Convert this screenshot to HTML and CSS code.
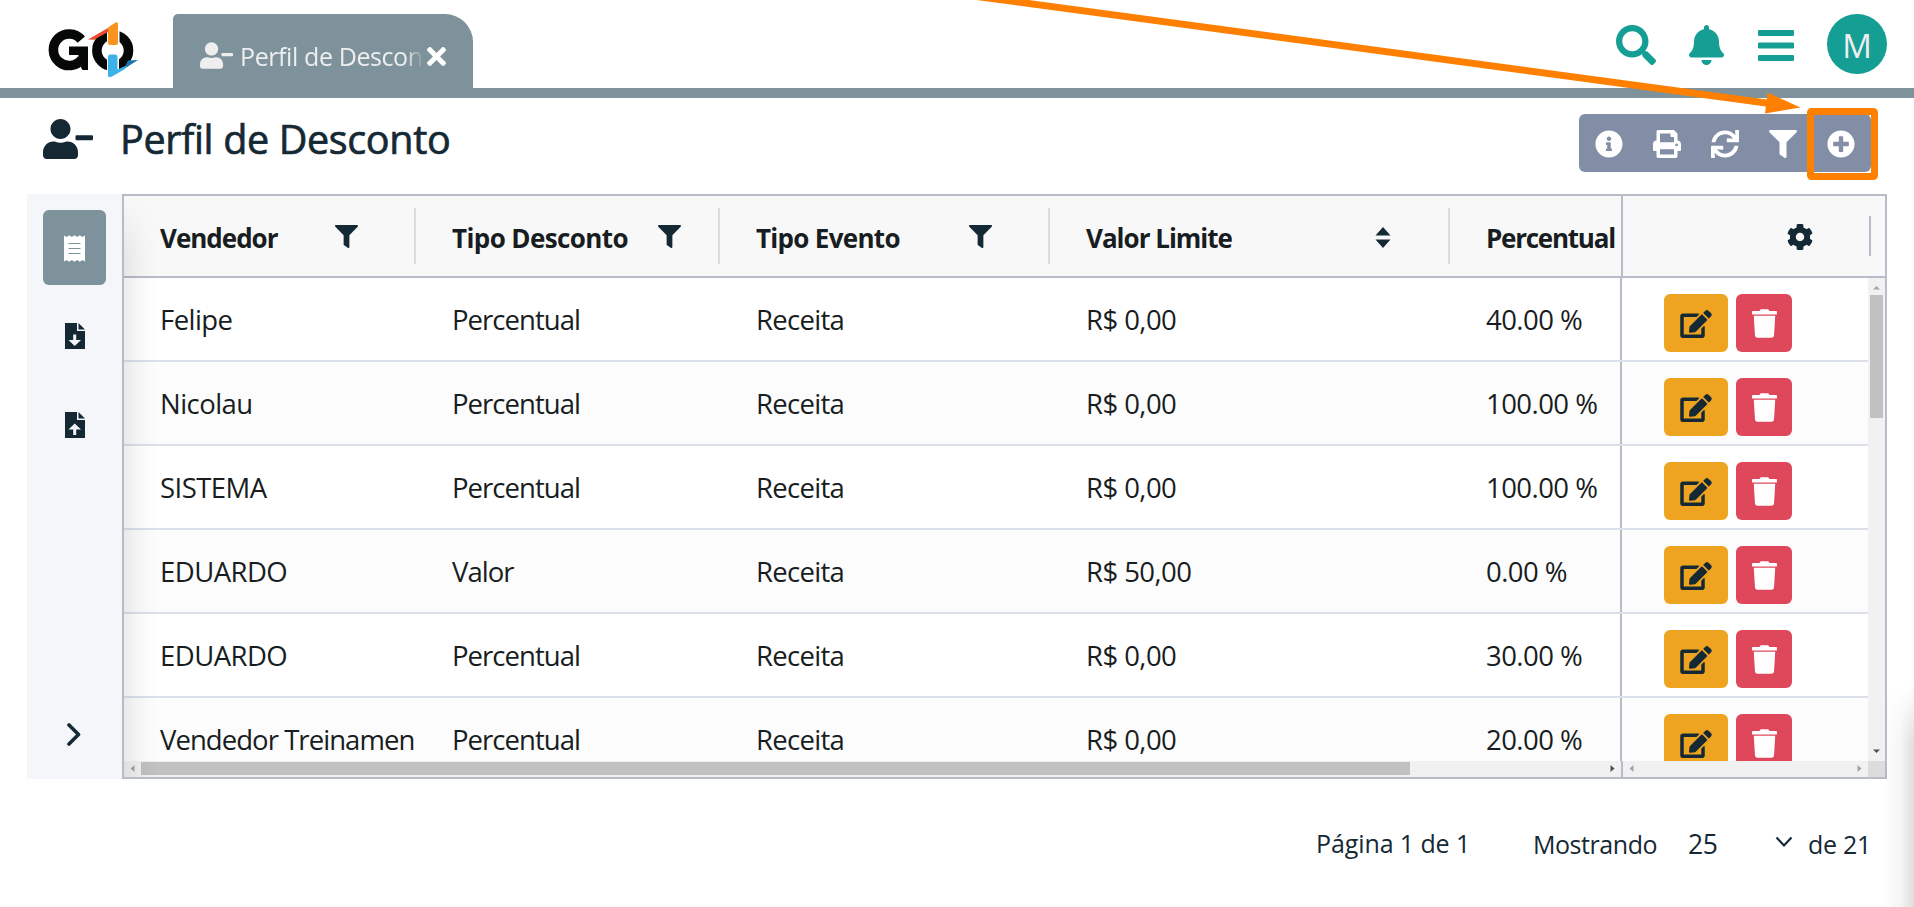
FILE: index.html
```html
<!DOCTYPE html>
<html lang="pt-BR">
<head>
<meta charset="utf-8">
<title>Perfil de Desconto</title>
<link rel="stylesheet" href="styles.css">
</head>
<body>
<svg class="sprite" aria-hidden="true">
  <symbol id="user-minus" viewBox="0 0 640 512"><path d="M624 208H432c-8.800 0-16 7.200-16 16v32c0 8.800 7.200 16 16 16h192c8.800 0 16-7.200 16-16v-32c0-8.800-7.200-16-16-16zm-400 48c70.700 0 128-57.300 128-128S294.700 0 224 0 96 57.300 96 128s57.300 128 128 128zm89.600 32h-16.700c-22.200 10.200-46.900 16-72.900 16s-50.600-5.800-72.900-16h-16.700C60.200 288 0 348.200 0 422.400V464c0 26.500 21.500 48 48 48h352c26.500 0 48-21.500 48-48v-41.600c0-74.200-60.200-134.400-134.400-134.400z"/></symbol>
  <symbol id="times" viewBox="0 80 352 352"><path d="M242.720 256l100.070-100.070c12.280-12.280 12.280-32.190 0-44.480l-22.240-22.240c-12.280-12.280-32.190-12.280-44.480 0L176 189.280 75.930 89.210c-12.280-12.280-32.190-12.280-44.480 0L9.210 111.450c-12.280 12.280-12.280 32.190 0 44.480L109.280 256 9.210 356.070c-12.280 12.280-12.280 32.190 0 44.480l22.240 22.240c12.280 12.280 32.200 12.280 44.480 0L176 322.720l100.070 100.070c12.280 12.280 32.200 12.280 44.480 0l22.240-22.240c12.280-12.280 12.280-32.190 0-44.480L242.720 256z"/></symbol>
  <symbol id="search" viewBox="0 0 512 512"><path d="M505 442.700L405.300 343c-4.500-4.500-10.600-7-17-7H372c27.600-35.300 44-79.700 44-128C416 93.100 322.900 0 208 0S0 93.100 0 208s93.100 208 208 208c48.300 0 92.700-16.400 128-44v16.300c0 6.400 2.500 12.500 7 17l99.700 99.700c9.400 9.400 24.600 9.400 33.900 0l28.300-28.300c9.400-9.400 9.400-24.600.1-34zM208 336c-70.700 0-128-57.200-128-128 0-70.700 57.200-128 128-128 70.700 0 128 57.200 128 128 0 70.700-57.200 128-128 128z"/></symbol>
  <symbol id="bell" viewBox="0 0 448 512"><path d="M224 512c35.320 0 63.970-28.650 63.970-64H160.030c0 35.350 28.650 64 63.970 64zm215.390-149.710c-19.320-20.760-55.470-51.990-55.470-154.290 0-77.700-54.480-139.900-127.940-155.160V32c0-17.670-14.320-32-31.980-32s-31.980 14.330-31.980 32v20.840C118.560 68.100 64.080 130.300 64.080 208c0 102.300-36.150 133.530-55.470 154.290-6 6.450-8.660 14.160-8.610 21.710.11 16.400 12.980 32 32.100 32h383.800c19.120 0 32-15.600 32.100-32 .05-7.550-2.610-15.270-8.610-21.710z"/></symbol>
  <symbol id="bars" viewBox="0 0 36 32"><rect width="36" height="6" rx="1.200"/><rect y="12.500" width="36" height="6" rx="1.200"/><rect y="25" width="36" height="6" rx="1.200"/></symbol>
  <symbol id="info" viewBox="0 0 512 512"><path d="M256 8C119.043 8 8 119.083 8 256c0 136.997 111.043 248 248 248s248-111.003 248-248C504 119.083 392.957 8 256 8zm0 110c23.196 0 42 18.804 42 42s-18.804 42-42 42-42-18.804-42-42 18.804-42 42-42zm56 254c0 6.627-5.373 12-12 12h-88c-6.627 0-12-5.373-12-12v-24c0-6.627 5.373-12 12-12h12v-64h-12c-6.627 0-12-5.373-12-12v-24c0-6.627 5.373-12 12-12h64c6.627 0 12 5.373 12 12v100h12c6.627 0 12 5.373 12 12v24z"/></symbol>
  <symbol id="print" viewBox="0 0 512 512"><path d="M448 192V77.250c0-8.490-3.370-16.620-9.370-22.630L393.370 9.370c-6-6-14.140-9.370-22.630-9.370H96C78.330 0 64 14.330 64 32v160c-35.350 0-64 28.650-64 64v112c0 8.840 7.160 16 16 16h48v96c0 17.670 14.330 32 32 32h320c17.670 0 32-14.330 32-32v-96h48c8.840 0 16-7.160 16-16V256c0-35.350-28.650-64-64-64zm-64 256H128v-96h256v96zm0-224H128V64h192v48c0 8.840 7.160 16 16 16h48v96zm48 72c-13.250 0-24-10.750-24-24 0-13.260 10.750-24 24-24s24 10.740 24 24c0 13.250-10.750 24-24 24z"/></symbol>
  <symbol id="sync" viewBox="0 0 512 512"><path d="M440.650 12.570l4 82.770A247.160 247.160 0 0 0 255.830 8C134.730 8 33.910 94.920 12.290 209.820A12 12 0 0 0 24.090 224h49.050a12 12 0 0 0 11.670-9.260 175.910 175.910 0 0 1 317-56.940l-101.460-4.860a12 12 0 0 0-12.570 12v47.410a12 12 0 0 0 12 12H500a12 12 0 0 0 12-12V12a12 12 0 0 0-12-12h-47.370a12 12 0 0 0-11.980 12.570zM255.830 432a175.610 175.610 0 0 1-146-77.800l101.800 4.870a12 12 0 0 0 12.570-12v-47.400a12 12 0 0 0-12-12H12a12 12 0 0 0-12 12V500a12 12 0 0 0 12 12h47.350a12 12 0 0 0 12-12.600l-4.150-82.570A247.170 247.170 0 0 0 255.830 504c121.110 0 221.930-86.920 243.550-201.820a12 12 0 0 0-11.800-14.180h-49.050a12 12 0 0 0-11.670 9.260A175.860 175.860 0 0 1 255.830 432z"/></symbol>
  <symbol id="filter" viewBox="0 0 512 512"><path d="M487.976 0H24.028C2.710 0-8.047 25.866 7.058 40.971L192 225.941V432c0 7.831 3.821 15.170 10.237 19.662l80 55.980C298.020 518.690 320 507.493 320 487.980V225.941l184.947-184.970C520.021 25.896 509.338 0 487.976 0z"/></symbol>
  <symbol id="plus" viewBox="0 0 512 512"><path d="M256 8C119 8 8 119 8 256s111 248 248 248 248-111 248-248S393 8 256 8zm144 276c0 6.600-5.400 12-12 12h-92v92c0 6.600-5.400 12-12 12h-56c-6.600 0-12-5.400-12-12v-92h-92c-6.600 0-12-5.400-12-12v-56c0-6.600 5.400-12 12-12h92v-92c0-6.600 5.400-12 12-12h56c6.600 0 12 5.400 12 12v92h92c6.600 0 12 5.400 12 12v56z"/></symbol>
  <symbol id="trash" viewBox="0 0 448 512"><path d="M432 32H312l-9.400-18.700A24 24 0 0 0 281.100 0H166.800a23.720 23.720 0 0 0-21.400 13.300L136 32H16A16 16 0 0 0 0 48v32a16 16 0 0 0 16 16h416a16 16 0 0 0 16-16V48a16 16 0 0 0-16-16zM53.200 467a48 48 0 0 0 47.900 45h245.800a48 48 0 0 0 47.900-45L416 116H32z"/></symbol>
  <symbol id="edit" viewBox="0 0 576 512"><path d="M402.600 83.200l90.200 90.200c3.800 3.800 3.800 10 0 13.800L274.400 405.600l-92.800 10.300c-12.400 1.400-22.900-9.100-21.500-21.500l10.300-92.800L388.800 83.200c3.800-3.800 10-3.800 13.800 0zm162-22.900l-48.800-48.800c-15.200-15.200-39.900-15.200-55.200 0l-35.400 35.400c-3.800 3.800-3.800 10 0 13.800l90.200 90.200c3.800 3.800 10 3.800 13.800 0l35.400-35.400c15.200-15.300 15.200-40 0-55.200zM384 346.200V448H64V128h229.800c3.200 0 6.200-1.300 8.500-3.500l40-40c7.600-7.600 2.200-20.500-8.500-20.500H48C21.500 64 0 85.500 0 112v352c0 26.500 21.500 48 48 48h352c26.500 0 48-21.500 48-48V306.200c0-10.700-12.900-16-20.500-8.500l-40 40c-2.200 2.300-3.500 5.300-3.500 8.500z"/></symbol>
  <symbol id="cog" viewBox="8 8 496 496"><path d="M487.400 315.700l-42.600-24.600c4.300-23.200 4.300-47 0-70.200l42.600-24.600c4.900-2.800 7.100-8.600 5.500-14-11.100-35.600-30-67.800-54.700-94.600-3.800-4.100-10-5.100-14.800-2.300L380.800 110c-17.900-15.400-38.500-27.300-60.800-35.100V25.800c0-5.600-3.900-10.500-9.400-11.700-36.700-8.200-74.300-7.800-109.200 0-5.500 1.200-9.400 6.100-9.400 11.700V75c-22.200 7.900-42.800 19.800-60.800 35.100L88.700 85.500c-4.900-2.800-11-1.900-14.800 2.300-24.700 26.700-43.600 58.900-54.700 94.600-1.700 5.400.6 11.200 5.500 14L67.300 221c-4.300 23.200-4.300 47 0 70.200l-42.600 24.600c-4.900 2.800-7.100 8.600-5.500 14 11.100 35.600 30 67.800 54.700 94.600 3.800 4.100 10 5.100 14.800 2.300l42.600-24.600c17.900 15.400 38.500 27.300 60.800 35.100v49.200c0 5.600 3.900 10.500 9.400 11.700 36.700 8.200 74.300 7.800 109.200 0 5.500-1.200 9.400-6.100 9.400-11.700v-49.200c22.200-7.900 42.800-19.800 60.800-35.100l42.600 24.600c4.900 2.800 11 1.900 14.800-2.300 24.700-26.700 43.600-58.900 54.700-94.600 1.500-5.500-.7-11.300-5.600-14.100zM256 336c-44.100 0-80-35.900-80-80s35.900-80 80-80 80 35.900 80 80-35.900 80-80 80z"/></symbol>
</svg>

<header class="topbar">
  <svg class="logo" viewBox="0 0 90 56" role="img" aria-label="GO">
    <path class="stroke" d="M33.300 17.600A15.800 15.800 0 1 0 34 37"/>
    <path class="ink" d="M21 24.500h19V48h-5.500l-4-7V33H21z"/>
    <ellipse class="stroke" cx="64.700" cy="28.500" rx="15.800" ry="15.500"/>
    <path class="cut" d="M59 1h12.500v22L69 27l2 6v16H59V34l3-6-3-4z"/>
    <path class="red" d="M40 17.500 60 6v4L46 17.800z"/>
    <path class="orange" d="M60 5.500 67.500.6q2.500-1.200 2.500 1.600v18.300q0 2.500-2.500 2.500h-5Q60 23 60 20.500z"/>
    <path class="navy" d="m80 38.500 10-.5-14 9z"/>
    <path class="blue" d="M62.500 32.500H67q2.500 0 2.500 2.500v12.500l9-4L77 47 63.500 54.700Q60 56 60 53.500V35q0-2.500 2.500-2.500z"/>
  </svg>
  <div class="tab">
    <svg class="tab-icon"><use href="#user-minus"/></svg>
    <span class="tab-label">Perfil de Descon</span>
    <svg class="tab-close"><use href="#times"/></svg>
  </div>
  <nav class="top-actions">
    <svg class="i-search"><use href="#search"/></svg>
    <svg class="i-bell"><use href="#bell"/></svg>
    <svg class="i-bars"><use href="#bars"/></svg>
    <span class="avatar">M</span>
  </nav>
</header>

<section class="heading">
  <svg class="heading-icon"><use href="#user-minus"/></svg>
  <h1>Perfil de Desconto</h1>
  <div class="toolbar">
    <svg><use href="#info"/></svg>
    <svg><use href="#print"/></svg>
    <svg><use href="#sync"/></svg>
    <svg><use href="#filter"/></svg>
    <svg><use href="#plus"/></svg>
  </div>
</section>

<main class="content">
  <aside class="side">
    <div class="side-item active">
      <svg class="i-receipt" viewBox="0 0 21 27"><path fill="#fff" d="M0 .5 2.600 2 5.200.3 7.900 2 10.500.3 13.100 2 15.800.3 18.400 2 21 .5v26L18.400 25l-2.600 1.700L13.100 25l-2.600 1.700L7.900 25l-2.700 1.700L2.600 25 0 26.500z"/><path stroke="#7e929c" stroke-width="1" d="M4.500 8.500h12M4.500 13.500h12M4.500 18.500h12"/></svg>
    </div>
    <div class="side-item">
      <svg class="i-file" viewBox="0 0 20 26"><path d="M0 0h12v8h8v18H0zM13.500 0 20 6.500h-6.500z"/><path class="hole" d="M8.200 11.500h3V17H16l-6.300 6L3.500 17h4.700z"/></svg>
    </div>
    <div class="side-item">
      <svg class="i-file" viewBox="0 0 20 26"><path d="M0 0h12v8h8v18H0zM13.500 0 20 6.500h-6.500z"/><path class="hole" d="M8.200 23h3v-5.500H16l-6.300-6-6.200 6h4.700z"/></svg>
    </div>
    <svg class="i-chevron" viewBox="0 0 14 24"><path d="m2 2 9.500 9.500L2 21"/></svg>
  </aside>

  <div class="grid">
    <div class="grid-head">
      <div class="cols">
        <div class="th c1"><span>Vendedor</span><svg><use href="#filter"/></svg></div>
        <div class="th c2"><span>Tipo Desconto</span><svg><use href="#filter"/></svg></div>
        <div class="th c3"><span>Tipo Evento</span><svg><use href="#filter"/></svg></div>
        <div class="th c4"><span>Valor Limite</span><svg class="i-sort" viewBox="0 0 16 21"><path d="M8 0l7.500 8.500H.5zM8 21l7.500-8.500H.5z"/></svg></div>
        <div class="th c5"><span>Percentual</span></div>
      </div>
      <div class="pin-head"><svg><use href="#cog"/></svg><i></i></div>
    </div>
    <div class="grid-body">
      <div class="rows">
        <div class="row"><div class="cols"><span class="c1">Felipe</span><span class="c2">Percentual</span><span class="c3">Receita</span><span class="c4">R$ 0,00</span><span class="c5">40.00 %</span></div><div class="pin"><b class="edit"><svg><use href="#edit"/></svg></b><b class="del"><svg><use href="#trash"/></svg></b></div></div>
        <div class="row"><div class="cols"><span class="c1">Nicolau</span><span class="c2">Percentual</span><span class="c3">Receita</span><span class="c4">R$ 0,00</span><span class="c5">100.00 %</span></div><div class="pin"><b class="edit"><svg><use href="#edit"/></svg></b><b class="del"><svg><use href="#trash"/></svg></b></div></div>
        <div class="row"><div class="cols"><span class="c1">SISTEMA</span><span class="c2">Percentual</span><span class="c3">Receita</span><span class="c4">R$ 0,00</span><span class="c5">100.00 %</span></div><div class="pin"><b class="edit"><svg><use href="#edit"/></svg></b><b class="del"><svg><use href="#trash"/></svg></b></div></div>
        <div class="row"><div class="cols"><span class="c1">EDUARDO</span><span class="c2">Valor</span><span class="c3">Receita</span><span class="c4">R$ 50,00</span><span class="c5">0.00 %</span></div><div class="pin"><b class="edit"><svg><use href="#edit"/></svg></b><b class="del"><svg><use href="#trash"/></svg></b></div></div>
        <div class="row"><div class="cols"><span class="c1">EDUARDO</span><span class="c2">Percentual</span><span class="c3">Receita</span><span class="c4">R$ 0,00</span><span class="c5">30.00 %</span></div><div class="pin"><b class="edit"><svg><use href="#edit"/></svg></b><b class="del"><svg><use href="#trash"/></svg></b></div></div>
        <div class="row"><div class="cols"><span class="c1 long">Vendedor Treinamen</span><span class="c2">Percentual</span><span class="c3">Receita</span><span class="c4">R$ 0,00</span><span class="c5">20.00 %</span></div><div class="pin"><b class="edit"><svg><use href="#edit"/></svg></b><b class="del"><svg><use href="#trash"/></svg></b></div></div>
      </div>
      <div class="vscroll">
        <svg viewBox="0 0 8 5"><path class="dim" d="M0 4.500h7L3.500 1z"/></svg>
        <div class="vthumb"></div>
        <svg viewBox="0 0 8 5"><path class="dark" d="M0 .5h7L3.500 4z"/></svg>
      </div>
    </div>
    <div class="hscroll">
      <div class="hleft">
        <svg viewBox="0 0 5 8"><path class="dim" d="M4.500 0v7L.5 3.500z"/></svg>
        <div class="hthumb"></div>
        <svg viewBox="0 0 5 8"><path class="dark" d="M.5 0v7l4-3.500z"/></svg>
      </div>
      <div class="hright">
        <svg viewBox="0 0 5 8"><path class="dim" d="M4.500 0v7L.5 3.500z"/></svg>
        <svg viewBox="0 0 5 8"><path class="dim" d="M.5 0v7l4-3.500z"/></svg>
      </div>
      <div class="corner"></div>
    </div>
    <div class="grid-shade"></div>
  </div>
</main>

<footer class="pager">
  <span class="page">Página 1 de 1</span>
  <span class="showing">Mostrando</span>
  <span class="size">25</span>
  <svg class="i-down" viewBox="0 0 18 12"><path d="m1.500 1.500 7.500 8 7.500-8"/></svg>
  <span class="total">de 21</span>
</footer>

<div class="edge-shadow"></div>
<svg class="callout" viewBox="0 0 1914 200">
  <path class="shaft" d="M973-4 1770 103.500"/>
  <path class="head" d="m1767.500 92.500 33 15-35.500 6z"/>
  <rect x="1810.500" y="111.500" width="64" height="65" rx="1"/>
</svg>
</body>
</html>
```
FILE: styles.css
```css
* { box-sizing: border-box; }
body {
  margin: 0;
  width: 1914px;
  height: 907px;
  overflow: hidden;
  position: relative;
  background: #fff;
  color: #152935;
  font-family: "Open Sans", "Noto Sans", sans-serif;
}
svg { display: block; fill: currentColor; flex: none; }
.sprite { position: absolute; width: 0; height: 0; }

/* top bar */
.topbar {
  display: flex;
  align-items: flex-start;
  height: 98px;
  padding: 14px 27px 0 48px;
  border-bottom: 10px solid #7e929c;
}
.logo { width: 90px; height: 56px; margin: 8px 35px 0 0; overflow: visible; }
.logo .ink { fill: #060808; }
.logo .stroke { fill: none; stroke: #060808; stroke-width: 9.6; }
.logo .cut { fill: #fff; }
.logo .red { fill: #ee4a2b; }
.logo .orange { fill: #f7931e; }
.logo .navy { fill: #1c75ae; }
.logo .blue { fill: #3db2e8; }
.tab {
  display: flex;
  align-items: center;
  width: 300px;
  height: 74px;
  padding: 9px 27px 0 27px;
  border-radius: 5px 28px 0 0;
  background: #7e929c;
  color: #eee;
}
.tab-icon { width: 33px; height: 27px; margin: -1px 7px 0 0; }
.tab-label {
  width: 187px;
  white-space: nowrap;
  font-size: 25px;
  line-height: 36px;
  letter-spacing: -.4px;
  -webkit-mask-image: linear-gradient(to right, #000 165px, transparent 184px);
  mask-image: linear-gradient(to right, #000 165px, transparent 184px);
}
.tab-close { width: 19px; height: 19px; margin: 2px 0 0 0; color: #fff; }
.top-actions { display: flex; align-items: center; height: 60px; margin-left: auto; color: #159e94; }
.i-search { width: 40px; height: 40px; margin: 2px 33px 0 0; }
.i-bell { width: 35px; height: 40px; margin: 2px 34px 0 0; }
.i-bars { width: 36px; height: 32px; margin: 3px 33px 0 0; }
.avatar {
  width: 60px;
  height: 60px;
  border-radius: 50%;
  background: #159e94;
  color: #eee;
  font-size: 33px;
  line-height: 63px;
  text-align: center;
}

/* page heading */
.heading { display: flex; align-items: flex-start; height: 96px; padding: 16px 43px 0 43px; }
.heading-icon { width: 50px; height: 40px; margin: 5px 27px 0 0; }
h1 { margin: 0; font-size: 39.5px; line-height: 50px; font-weight: 400; letter-spacing: -.35px; -webkit-text-stroke: .7px #152935; }
.toolbar {
  display: flex;
  align-items: center;
  gap: 30px;
  width: 292px;
  height: 58px;
  margin-left: auto;
  padding-left: 16px;
  border-radius: 6px;
  background: #828ea6;
  color: #fff;
}
.toolbar svg { width: 28px; height: 28px; margin-top: 1px; }

/* content */
.content { display: flex; height: 585px; padding: 0 27px; }
.side { display: flex; flex-direction: column; width: 95px; padding: 16px; background: #f5f6fa; }
.side-item { display: flex; align-items: center; justify-content: center; width: 63px; height: 75px; margin-bottom: 14px; }
.side-item.active { border-radius: 6px; background: #7e929c; }
.i-receipt { width: 21px; height: 27px; margin-top: 1px; }
.i-file { width: 20px; height: 26px; margin-top: -2px; }
.hole { fill: #f5f6fa; }
.i-chevron { width: 14px; height: 24px; margin: auto 0 16px 24px; }
.i-chevron path { fill: none; stroke: #152935; stroke-width: 3.6; stroke-linecap: round; stroke-linejoin: round; }

.grid { position: relative; flex: 1; display: flex; flex-direction: column; border: 2px solid #b8bcc8; color: #181d22; }
.grid-shade {
  position: absolute;
  left: 0; top: 0; bottom: 0;
  width: 34px;
  background: linear-gradient(to right, rgba(0,0,0,.07), rgba(0,0,0,.02) 55%, transparent);
  -webkit-mask-image: linear-gradient(transparent, #000 60px);
  mask-image: linear-gradient(transparent, #000 60px);
}
.cols { display: grid; grid-template-columns: 292px 304px 330px 400px 1fr; overflow: hidden; white-space: nowrap; }
.grid-head { display: flex; height: 82px; border-bottom: 2px solid #b8bcc8; background: #f8f8f8; font-weight: 700; font-size: 26px; }
.grid-head .cols { width: 1497px; }
.th { display: flex; align-items: center; padding-left: 36px; height: 56px; margin-top: 12px; border-right: 2px solid #dadde3; line-height: 56px; letter-spacing: -.7px; overflow: hidden; }
.th span { padding-top: 3px; }
.th svg { width: 23px; height: 23px; margin-left: auto; margin-top: 1px; color: #152935; }
.th.c1 { letter-spacing: -1px; }
.th.c2 { letter-spacing: -.6px; }
.th.c4 { letter-spacing: -1px; }
.th.c5 { letter-spacing: -1.25px; border-right: 0; }
.c1 svg { margin-right: 56px; }
.c2 svg { margin-right: 37px; }
.c3 svg { margin-right: 56px; }
.th .i-sort { width: 16px; height: 21px; margin-right: 57px; margin-top: 2px; }
.pin-head { display: flex; flex: 1; align-items: center; justify-content: flex-end; border-left: 2px solid #b8bcc8; }
.pin-head svg { width: 26px; height: 26px; margin: 2px 56px 0 0; color: #152935; }
.pin-head i { width: 2px; height: 40px; margin-right: 14px; background: #b8bcc8; }

.grid-body { display: flex; height: 483px; overflow: hidden; }
.rows { width: 1744px; }
.row { display: flex; height: 84px; border-bottom: 2px solid #dce0ea; background: #fff; }
.row:nth-child(even) { background: #fcfcfc; }
.row .cols { width: 1496px; font-size: 27.5px; line-height: 83px; letter-spacing: -.55px; }
.row span { padding-left: 36px; overflow: hidden; }
.row .c2 { letter-spacing: -.95px; }
.row .c3 { letter-spacing: -.7px; }
.row .long { letter-spacing: -.95px; }
.pin { display: flex; flex: 1; gap: 8px; padding: 16px 0 0 42px; border-left: 2px solid #b8bcc8; }
.pin b { display: flex; align-items: center; justify-content: center; height: 58px; border-radius: 6px; }
.edit { width: 64px; background: #efa421; color: #152935; }
.del { width: 56px; background: #df475a; color: #fff; }
.edit svg { width: 32px; height: 28px; margin-top: 1px; }
.del svg { width: 25px; height: 29px; }

.vscroll { display: flex; flex-direction: column; align-items: center; width: 17px; background: #f1f1f1; }
.vscroll svg { width: 8px; height: 5px; margin-top: 7px; }
.vthumb { width: 13px; height: 123px; margin: 5px 0 324px; background: #c1c1c1; }
.hscroll { display: flex; height: 16px; background: #f1f1f1; }
.hscroll svg { width: 5px; height: 8px; }
.hleft { display: flex; align-items: center; width: 1497px; padding: 0 6px 1px 6px; }
.hthumb { width: 1269px; height: 13px; margin: 0 auto 0 6px; background: #c1c1c1; }
.hright { display: flex; align-items: center; justify-content: space-between; width: 247px; padding: 0 6px 1px; border-left: 2px solid #b8bcc8; }
.corner { width: 17px; background: #dcdcdc; }
.dim { fill: #a3a3a3; }
.dark { fill: #505050; }

/* pager */
.pager { display: flex; padding: 42px 0 0 1316px; font-size: 25px; line-height: 44px; white-space: nowrap; letter-spacing: -.45px; }
.page { width: 217px; letter-spacing: -.1px; }
.showing { width: 155px; padding-top: 1px; }
.size { width: 87px; padding-top: 1px; font-size: 26.5px; }
.i-down { width: 18px; height: 12px; margin-top: 15px; }
.i-down path { fill: none; stroke: #152935; stroke-width: 2.2; }
.total { margin-left: 15px; padding-top: 1px; letter-spacing: -.25px; }

.edge-shadow {
  position: absolute;
  right: 0; top: 684px;
  width: 30px;
  height: 223px;
  background: linear-gradient(to left, rgba(0,0,0,.13), rgba(0,0,0,.04) 45%, transparent);
  -webkit-mask-image: linear-gradient(transparent, #000 60px);
  mask-image: linear-gradient(transparent, #000 60px);
}
.callout { position: absolute; left: 0; top: 0; width: 1914px; height: 200px; }
.callout .shaft { stroke: #ff8000; stroke-width: 7; }
.callout .head { fill: #ff8000; }
.callout rect { fill: none; stroke: #ff8000; stroke-width: 7; stroke-linejoin: round; }
```
